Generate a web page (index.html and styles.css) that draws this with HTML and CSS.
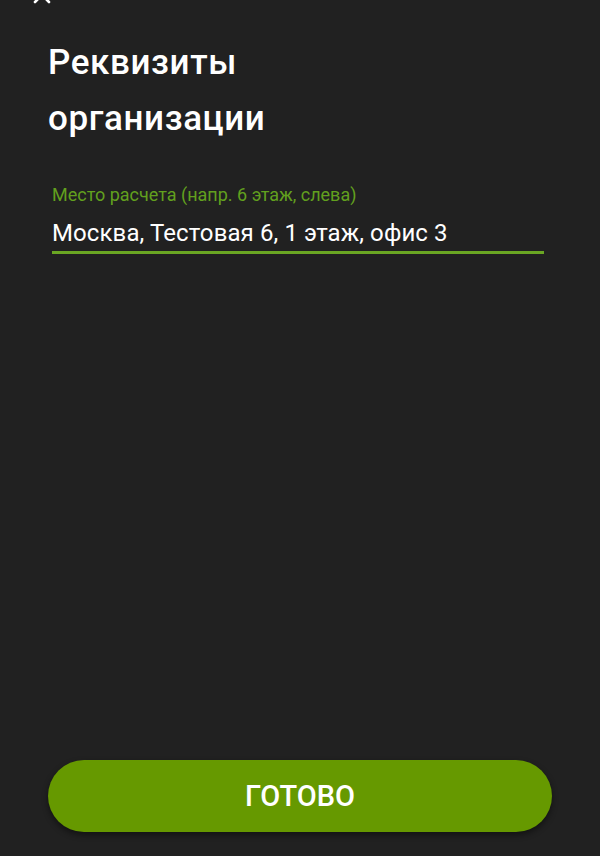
FILE: index.html
```html
<!DOCTYPE html>
<html lang="ru">
<head>
<meta charset="utf-8">
<link rel="stylesheet" href="styles.css">
</head>
<body>
<div class="screen">
  <button class="close" aria-label="Закрыть">
    <svg viewBox="0 0 24 24" width="24" height="24"><path d="M5 5 L19 19 M19 5 L5 19" stroke="#fff" stroke-width="2.6" stroke-linecap="round" fill="none"/></svg>
  </button>
  <h1 class="title">Реквизиты<br>организации</h1>
  <div class="field">
    <label class="field-label">Место расчета (напр. 6 этаж, слева)</label>
    <div class="field-value">Москва, Тестовая 6, 1 этаж, офис 3</div>
  </div>
  <div class="spacer"></div>
  <button class="done">ГОТОВО</button>
</div>
</body>
</html>
```
FILE: styles.css
```css
html, body {
  margin: 0;
  padding: 0;
  background: #212121;
}
body {
  font-family: Roboto, "Noto Sans", sans-serif;
  color: #fff;
}
.screen {
  position: relative;
  display: flex;
  flex-direction: column;
  height: 856px;
  overflow: hidden;
}
.close {
  position: absolute;
  left: 30px;
  top: -17px;
  width: 24px;
  height: 24px;
  padding: 0;
  border: 0;
  background: none;
}
.close svg { display: block; }
.title {
  margin: 35px 48px 0;
  font-size: 35px;
  line-height: 56px;
  font-weight: 500;
  letter-spacing: 0.6px;
}
.field {
  margin: 38px 56px 0 52px;
  display: flex;
  flex-direction: column;
}
.field-label {
  font-size: 18px;
  line-height: 20px;
  color: #62a01e;
}
.field-value {
  margin-top: 12px;
  font-size: 24px;
  line-height: 32px;
  letter-spacing: 0.1px;
  padding-bottom: 2px;
  border-bottom: 3px solid #6aa623;
}
.spacer { flex: 1; }
.done {
  margin: 0 48px 24px;
  height: 72px;
  border: 0;
  border-radius: 36px;
  background: #669900;
  color: #fff;
  font-family: Roboto, "Noto Sans", sans-serif;
  font-size: 29px;
  font-weight: 500;
  box-shadow: 0 3px 6px rgba(0,0,0,0.45);
}
```
